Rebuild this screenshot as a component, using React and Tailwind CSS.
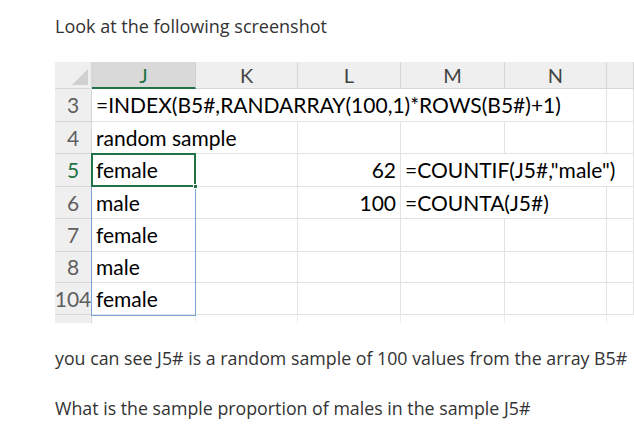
const cellFont = { fontFamily: 'Lato, "Open Sans", sans-serif' }

function Head({ children, active }) {
  return (
    <div
      className={
        active
          ? 'h-[27px] flex items-center justify-center bg-[#d9d9d9] border-r border-[#cfcfcf] border-b-2 border-b-[#217346] text-[#217346] text-[20px]'
          : 'h-[27px] flex items-center justify-center bg-[#efefef] border-r border-b border-[#d6d6d6] text-[#444] text-[20px]'
      }
    >
      {children}
    </div>
  )
}

function RowNum({ n, h, active }) {
  return (
    <div
      className={`${h} flex items-center justify-center bg-[#efefef] border-r border-b border-[#d6d6d6] text-[21px] ${active ? 'text-[#217346]' : 'text-[#5f5f5f]'}`}
    >
      {n}
    </div>
  )
}

function Cell({ children, h, span = '', right }) {
  return (
    <div
      className={`${h} ${span} flex items-center whitespace-nowrap border-r border-b border-[#e2e2e2] text-[21px] text-black px-[4px] ${right ? 'justify-end' : ''}`}
    >
      {children}
    </div>
  )
}

export default function App() {
  return (
    <div className="w-[634px] h-[445px] bg-white overflow-hidden" style={{ fontFamily: '"Open Sans", "Noto Sans", sans-serif' }}>
      <p className="pl-[55px] pt-[13px] text-[18px] leading-[26px] text-[#333]">Look at the following screenshot</p>

      <div className="relative mt-[23px] ml-[55px] grid grid-cols-[37px_104px_102px_103px_104px_102px_1fr]" style={cellFont}>
        <div className="h-[27px] bg-[#efefef] border-r border-b border-[#d6d6d6] flex items-end justify-end p-[3px]">
          <svg width="16" height="16" viewBox="0 0 16 16">
            <polygon points="16,0 16,16 0,16" fill="#d0d0d0" />
          </svg>
        </div>
        <Head active>J</Head>
        <Head>K</Head>
        <Head>L</Head>
        <Head>M</Head>
        <Head>N</Head>
        <Head />

        <RowNum n="3" h="h-[33px]" />
        <Cell h="h-[33px]" span="col-span-5">=INDEX(B5#,RANDARRAY(100,1)*ROWS(B5#)+1)</Cell>
        <Cell h="h-[33px]" />

        <RowNum n="4" h="h-[32px]" />
        <Cell h="h-[32px]" span="col-span-2">random sample</Cell>
        <Cell h="h-[32px]" />
        <Cell h="h-[32px]" />
        <Cell h="h-[32px]" />
        <Cell h="h-[32px]" />

        <RowNum n="5" h="h-[33px]" active />
        <Cell h="h-[33px]">female</Cell>
        <Cell h="h-[33px]" />
        <Cell h="h-[33px]" right>62</Cell>
        <Cell h="h-[33px]" span="col-span-3">=COUNTIF(J5#,"male")</Cell>

        <RowNum n="6" h="h-[32px]" />
        <Cell h="h-[32px]">male</Cell>
        <Cell h="h-[32px]" />
        <Cell h="h-[32px]" right>100</Cell>
        <Cell h="h-[32px]" span="col-span-2">=COUNTA(J5#)</Cell>
        <Cell h="h-[32px]" />

        {[
          ['7', 'female', 'h-[33px]'],
          ['8', 'male', 'h-[31px]'],
          ['104', 'female', 'h-[32px]'],
        ].map(([n, v, h]) => (
          <div key={n} className="contents">
            <RowNum n={n} h={h} />
            <Cell h={h}>{v}</Cell>
            <Cell h={h} />
            <Cell h={h} />
            <Cell h={h} />
            <Cell h={h} />
            <Cell h={h} />
          </div>
        ))}

        <div className="h-[8px] bg-[#efefef] border-r border-[#d6d6d6]" />
        <div className="h-[8px] border-r border-[#eeeeee]" />
        <div className="h-[8px] border-r border-[#eeeeee]" />
        <div className="h-[8px] border-r border-[#eeeeee]" />
        <div className="h-[8px] border-r border-[#eeeeee]" />
        <div className="h-[8px] border-r border-[#eeeeee]" />
        <div className="h-[8px]" />

        {/* spill range + active cell */}
        <div className="absolute left-[36px] top-[92px] w-[105px] h-[162px] border border-[#7fa3d6] pointer-events-none" />
        <div className="absolute left-[36px] top-[91px] w-[105px] h-[34px] border-2 border-[#217346] pointer-events-none" />
        <div className="absolute left-[138px] top-[122px] w-[5px] h-[5px] bg-[#217346] border border-white" />
      </div>

      <p className="pl-[55px] mt-[23px] text-[17.8px] leading-[24px] text-[#333]">you can see J5# is a random sample of 100 values from the array B5#</p>
      <p className="pl-[55px] mt-[26px] text-[17.8px] leading-[24px] text-[#333]">What is the sample proportion of males in the sample J5#</p>
    </div>
  )
}
